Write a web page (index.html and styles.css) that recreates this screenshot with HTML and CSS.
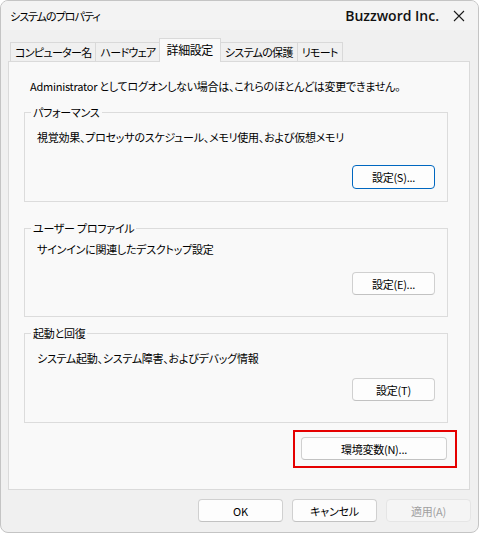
FILE: index.html
```html
<!DOCTYPE html>
<html lang="ja">
<head>
  <meta charset="UTF-8">
  <meta name="viewport" content="width=device-width, initial-scale=1">
  <title>システムのプロパティ</title>
  <link rel="stylesheet" href="styles.css">
</head>

<body>
  <div class="window">
    <div class="titlebar">
      <span class="title">システムのプロパティ</span>
      <span class="brand">Buzzword Inc.</span>
      <svg class="close" width="12" height="12" viewBox="0 0 12 12">
        <path d="M1 1 L11 11 M11 1 L1 11" stroke="#1b1b1b" stroke-width="1.1" fill="none"/>
      </svg>
    </div>

    <div class="tabs">
      <div class="tab">コンピューター名</div>
      <div class="tab">ハードウェア</div>
      <div class="tab active">詳細設定</div>
      <div class="tab">システムの保護</div>
      <div class="tab">リモート</div>
    </div>

    <div class="panel">
      <p class="note">Administrator としてログオンしない場合は、これらのほとんどは変更できません。</p>

      <fieldset class="group group-perf">
        <legend>パフォーマンス</legend>
        <p>視覚効果、プロセッサのスケジュール、メモリ使用、および仮想メモリ</p>
        <div class="group-actions">
          <button class="btn btn-default">設定(S)...</button>
        </div>
      </fieldset>

      <fieldset class="group group-profile">
        <legend>ユーザー プロファイル</legend>
        <p>サインインに関連したデスクトップ設定</p>
        <div class="group-actions">
          <button class="btn">設定(E)...</button>
        </div>
      </fieldset>

      <fieldset class="group group-startup">
        <legend>起動と回復</legend>
        <p>システム起動、システム障害、およびデバッグ情報</p>
        <div class="group-actions">
          <button class="btn">設定(T)</button>
        </div>
      </fieldset>

      <div class="highlight">
        <button class="btn btn-env">環境変数(N)...</button>
      </div>
    </div>

    <div class="footer">
      <button class="btn btn-footer">OK</button>
      <button class="btn btn-footer">キャンセル</button>
      <button class="btn btn-footer" disabled>適用(A)</button>
    </div>
  </div>
</body>
</html>
```

FILE: styles.css
```css
* {
  box-sizing: border-box;
}
body {
  margin: 0;
  background: #fff;
  font-family: "Noto Sans CJK JP", sans-serif;
  font-size: 11px;
  letter-spacing: -0.25px;
  color: #000;
  font-feature-settings: "palt";
}
p {
  margin: 0;
  line-height: 16px;
}
.window {
  width: 479px;
  height: 533px;
  border: 1px solid #c4c4c4;
  border-radius: 8px;
  background: #f0f0f0;
  overflow: hidden;
  display: flex;
  flex-direction: column;
}
.titlebar {
  height: 29px;
  flex: none;
  background: #f3f3f3;
  display: flex;
  align-items: center;
  padding: 0 9px 0 9px;
}
.title {
  flex: 1;
  letter-spacing: -1px;
}
.brand {
  font-family: "Open Sans", sans-serif;
  font-weight: 600;
  font-size: 14px;
  letter-spacing: 0;
  margin-right: 14px;
  color: #111;
}
.close {
  margin-right: 4px;
}

/* tabs */
.tabs {
  height: 31px;
  flex: none;
  display: flex;
  align-items: flex-end;
  padding-left: 9px;
}
.tab {
  height: 19px;
  line-height: 18px;
  padding: 0 4px;
  letter-spacing: -0.7px;
  border: 1px solid #d9d9d9;
  border-bottom: none;
  margin-right: -1px;
  background: #f0f0f0;
}
.tab.active {
  height: 24px;
  line-height: 22px;
  font-size: 12px;
  letter-spacing: -0.4px;
  margin: 0 -1px -1px -1px;
  background: #f9f9f9;
  position: relative;
  z-index: 1;
  padding: 0 7px;
}

/* panel */
.panel {
  height: 429px;
  flex: none;
  margin: 0 8px 0 7px;
  border: 1px solid #dadada;
  background: #f9f9f9;
  padding: 16px 21px 0 15px;
  display: flex;
  flex-direction: column;
}
.note {
  margin-left: 6px;
}
.group {
  margin: 0;
  border: 1px solid #dcdcdc;
  padding: 9px 12px 12px;
  min-width: 0;
}
.group legend {
  line-height: 16px;
  padding: 0 2px;
  margin-left: -6px;
}
.group-perf {
  margin-top: 10px;
}
.group-profile {
  margin-top: 18px;
  padding-top: 5px;
  padding-bottom: 21px;
}
.group-startup {
  margin-top: 8px;
  padding-bottom: 21px;
}
.group-actions {
  display: flex;
  justify-content: flex-end;
  margin-top: 20px;
}
.group-profile .group-actions {
  margin-top: 15px;
}
.group-startup .group-actions {
  margin-top: 12px;
}

/* buttons */
.btn {
  font-family: inherit;
  font-size: 11px;
  letter-spacing: -0.25px;
  font-feature-settings: "palt";
  color: #000;
  background: #fdfdfd;
  border: 1px solid #d0d0d0;
  border-bottom-color: #c2c2c2;
  border-radius: 4px;
  width: 83px;
  height: 23px;
  padding: 0;
}
.btn-default {
  height: 24px;
  border-color: #0067c0;
}
.btn-env {
  width: 146px;
}
.btn:disabled {
  background: #f5f5f5;
  border-color: #e5e5e5;
  color: #a0a0a0;
}
.highlight {
  align-self: flex-end;
  margin: 7px -9px 0 0;
  border: 2px solid #e50000;
  padding: 5px 8px 6px 6px;
  display: flex;
}

.footer {
  display: flex;
  justify-content: flex-end;
  gap: 9px;
  margin-top: 9px;
  padding-right: 7px;
}
.btn-footer {
  width: 85px;
}
```
